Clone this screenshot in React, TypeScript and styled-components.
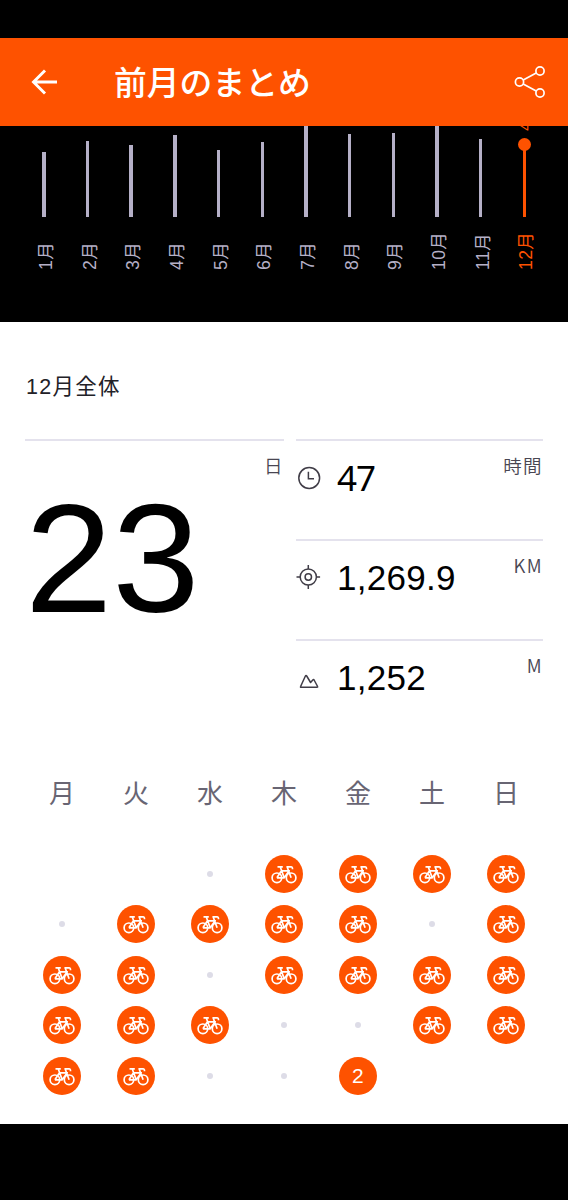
import React from "react";
import styled, { createGlobalStyle } from "styled-components";

const ORANGE = "#fe5200";
const LINE = "#e4e2ed";
const LATIN = '"Liberation Sans", "Noto Sans CJK JP", sans-serif';
const CJK = '"Noto Sans CJK JP", sans-serif';

const GlobalStyle = createGlobalStyle`
  *, *::before, *::after { box-sizing: border-box; }
  body { margin: 0; background: #000; }
`;

const Screen = styled.div`
  width: 568px;
  height: 1200px;
  padding-top: 38px;
  background: #000;
  overflow: hidden;
  font-family: ${LATIN};
`;

const AppBar = styled.header`
  display: flex;
  align-items: center;
  height: 88px;
  padding: 0 21px 0 27px;
  background: ${ORANGE};
  color: #fff;
`;

const Title = styled.h1`
  flex: 1;
  margin: 0 0 3px 54px;
  font: 500 32.8px/48px ${CJK};
  white-space: nowrap;
`;

const Chart = styled.section`
  display: flex;
  align-items: flex-end;
  height: 196px;
  padding: 0 22px 52px;
  overflow: hidden;
`;

const Month = styled.div<{ $active?: boolean }>`
  flex: 1;
  display: flex;
  flex-direction: column;
  align-items: center;
  color: ${(p) => (p.$active ? ORANGE : "#b5b0c7")};
`;

const Bar = styled.div<{ $height: number }>`
  flex: none;
  width: 3.4px;
  height: ${(p) => p.$height}px;
  background: currentColor;
`;

const Knob = styled.div`
  flex: none;
  width: 13px;
  height: 13px;
  margin-bottom: -2px;
  border-radius: 50%;
  background: currentColor;
`;

const Sideways = styled.span`
  writing-mode: vertical-rl;
  text-orientation: sideways;
  transform: rotate(180deg);
  white-space: nowrap;
`;

const MonthLabel = styled(Sideways)`
  height: 53px;
  margin-left: 4px;
  font-size: 17.6px;
  line-height: 22px;
  letter-spacing: 0.4px;
`;

const ValueLabel = styled(Sideways)`
  margin: 0 0 7px 3px;
  font-size: 17px;
  line-height: 20px;
`;

const Content = styled.main`
  height: 802px;
  padding: 48px 25px 0;
  background: #fff;
`;

const SectionTitle = styled.h2`
  margin: 0 0 35px;
  height: 34px;
  padding-left: 1px;
  font: 400 21.5px/34px ${LATIN};
  letter-spacing: 1.3px;
  color: #222127;
  white-space: nowrap;
`;

const Stats = styled.section`
  display: grid;
  grid-template-columns: 259px 247px;
  column-gap: 12px;
`;

const Unit = styled.span`
  font: 350 18.5px/28px ${CJK};
  letter-spacing: 1.4px;
  color: #494652;
`;

const Total = styled.div`
  display: flex;
  flex-direction: column;
  padding-top: 10px;
  border-top: 2px solid ${LINE};

  ${Unit} { align-self: flex-end; }
`;

const TotalValue = styled.strong`
  margin: 3px 0 0;
  font-weight: 400;
  font-size: 154px;
  line-height: 155px;
  transform: scaleX(1.02);
  transform-origin: left;
`;

const Metric = styled.div`
  display: flex;
  height: 100px;
  padding-top: 10px;
  border-top: 2px solid ${LINE};
  color: #403d47;

  svg { flex: none; margin-top: 14px; }
`;

const MetricValue = styled.span<{ $humanist?: boolean }>`
  flex: 1;
  margin-left: 15px;
  font-family: ${(p) => (p.$humanist ? '"Noto Sans", sans-serif' : LATIN)};
  font-size: 35px;
  line-height: 54px;
  letter-spacing: ${(p) => (p.$humanist ? "-0.9px" : "0.3px")};
  color: #000;
`;

const Weekdays = styled.div`
  display: grid;
  grid-template-columns: repeat(7, 1fr);
  margin: 33px 0 0;
  font: 400 26px/40px ${CJK};
  color: #686573;
  text-align: center;
`;

const Calendar = styled.div`
  display: grid;
  grid-template-columns: repeat(7, 1fr);
  grid-auto-rows: 50.6px;
  place-items: center;
  margin: 36.4px 0.4px 0 0;
`;

const Activity = styled.div`
  display: grid;
  place-items: center;
  width: 38px;
  height: 38px;
  border-radius: 50%;
  background: ${ORANGE};
  color: #fff;
  font-size: 21px;
  line-height: 38px;
`;

const Rest = styled.div`
  width: 6px;
  height: 6px;
  border-radius: 50%;
  background: #dddce7;
`;

const BackIcon = () => (
  <svg width="33" height="32" viewBox="0 0 33 32" fill="none" stroke="currentColor" strokeWidth="2.9">
    <path d="M30 16H7M18 4.500 6.500 16 18 27.500" />
  </svg>
);

const ShareIcon = () => (
  <svg width="36" height="36" viewBox="0 0 36 36" fill="none" stroke="currentColor" strokeWidth="1.7">
    <circle cx="8.500" cy="18" r="4.100" />
    <circle cx="29" cy="7" r="4.100" />
    <circle cx="29" cy="29" r="4.100" />
    <path d="m12.200 16 13-7M12.200 20l13 7" />
  </svg>
);

const ClockIcon = () => (
  <svg width="26" height="26" viewBox="0 0 26 26" fill="none" stroke="currentColor" strokeWidth="1.5">
    <circle cx="13.200" cy="13" r="10.400" />
    <path d="M12.400 6.800v7h5.600" />
  </svg>
);

const TargetIcon = () => (
  <svg width="26" height="26" viewBox="0 0 26 26" fill="none" stroke="currentColor" strokeWidth="1.500">
    <circle cx="12.300" cy="12" r="8.100" />
    <circle cx="12.300" cy="12" r="3.200" />
    <path d="M12.300 0v4M12.300 20v4M.5 12h3.700M20.400 12h3.700" />
  </svg>
);

const MountainIcon = () => (
  <svg width="26" height="26" viewBox="0 0 26 26" fill="none" stroke="currentColor" strokeWidth="1.500" strokeLinejoin="round">
    <path d="M4.600 21.500 9.400 11Q10 9.800 10.700 11l3.900 6.500 2.400-2.700Q17.600 14.200 18.100 15l3.500 6.500Q22 22.200 21 22.200H5Q4.200 22.200 4.600 21.500Z" />
  </svg>
);

const BikeIcon = () => (
  <svg width="26" height="20" viewBox="0 0 26 20" fill="none" stroke="currentColor" strokeWidth="1.700" strokeLinejoin="round">
    <circle cx="5.900" cy="13.800" r="4.800" />
    <circle cx="20.100" cy="13.800" r="4.800" />
    <path d="M6.500 2.800h5.300M9.200 2.800l4 11M5.900 13.800h7.300l5-7H10.500L5.900 13.800M20.100 13.800 16.100 2.800H20q1.600 0 1.500 2.400" />
  </svg>
);

const months = [65, 76, 72, 82, 67, 75, 92, 83, 84.5, 94, 78];

const metrics = [
  { icon: <ClockIcon />, value: "47", unit: "時間", humanist: true },
  { icon: <TargetIcon />, value: "1,269.9", unit: "KM" },
  { icon: <MountainIcon />, value: "1,252", unit: "M" },
];

/* b: ride, .: rest day, blank: outside the month */
const weeks = ["  .bbbb", ".bbbb.b", "bb.bbbb", "bbb..bb", "bb..2  "];

const renderDay = (day: string, key: string) => {
  if (day === " ") return <span key={key} />;
  if (day === ".") return <Rest key={key} />;
  return <Activity key={key}>{day === "b" ? <BikeIcon /> : day}</Activity>;
};

export default function App() {
  return (
    <Screen>
      <GlobalStyle />
      <AppBar>
        <BackIcon />
        <Title>前月のまとめ</Title>
        <ShareIcon />
      </AppBar>
      <Chart>
        {months.map((height, i) => (
          <Month key={i}>
            <Bar $height={height} />
            <MonthLabel>{i + 1}月</MonthLabel>
          </Month>
        ))}
        <Month $active>
          <ValueLabel>47</ValueLabel>
          <Knob />
          <Bar $height={68} />
          <MonthLabel>12月</MonthLabel>
        </Month>
      </Chart>
      <Content>
        <SectionTitle>12月全体</SectionTitle>
        <Stats>
          <Total>
            <Unit>日</Unit>
            <TotalValue>23</TotalValue>
          </Total>
          <div>
            {metrics.map((m) => (
              <Metric key={m.unit}>
                {m.icon}
                <MetricValue $humanist={m.humanist}>{m.value}</MetricValue>
                <Unit>{m.unit}</Unit>
              </Metric>
            ))}
          </div>
        </Stats>
        <Weekdays>
          {[..."月火水木金土日"].map((d) => (
            <span key={d}>{d}</span>
          ))}
        </Weekdays>
        <Calendar>
          {weeks.flatMap((week, w) => [...week].map((d, i) => renderDay(d, `${w}-${i}`)))}
        </Calendar>
      </Content>
    </Screen>
  );
}
